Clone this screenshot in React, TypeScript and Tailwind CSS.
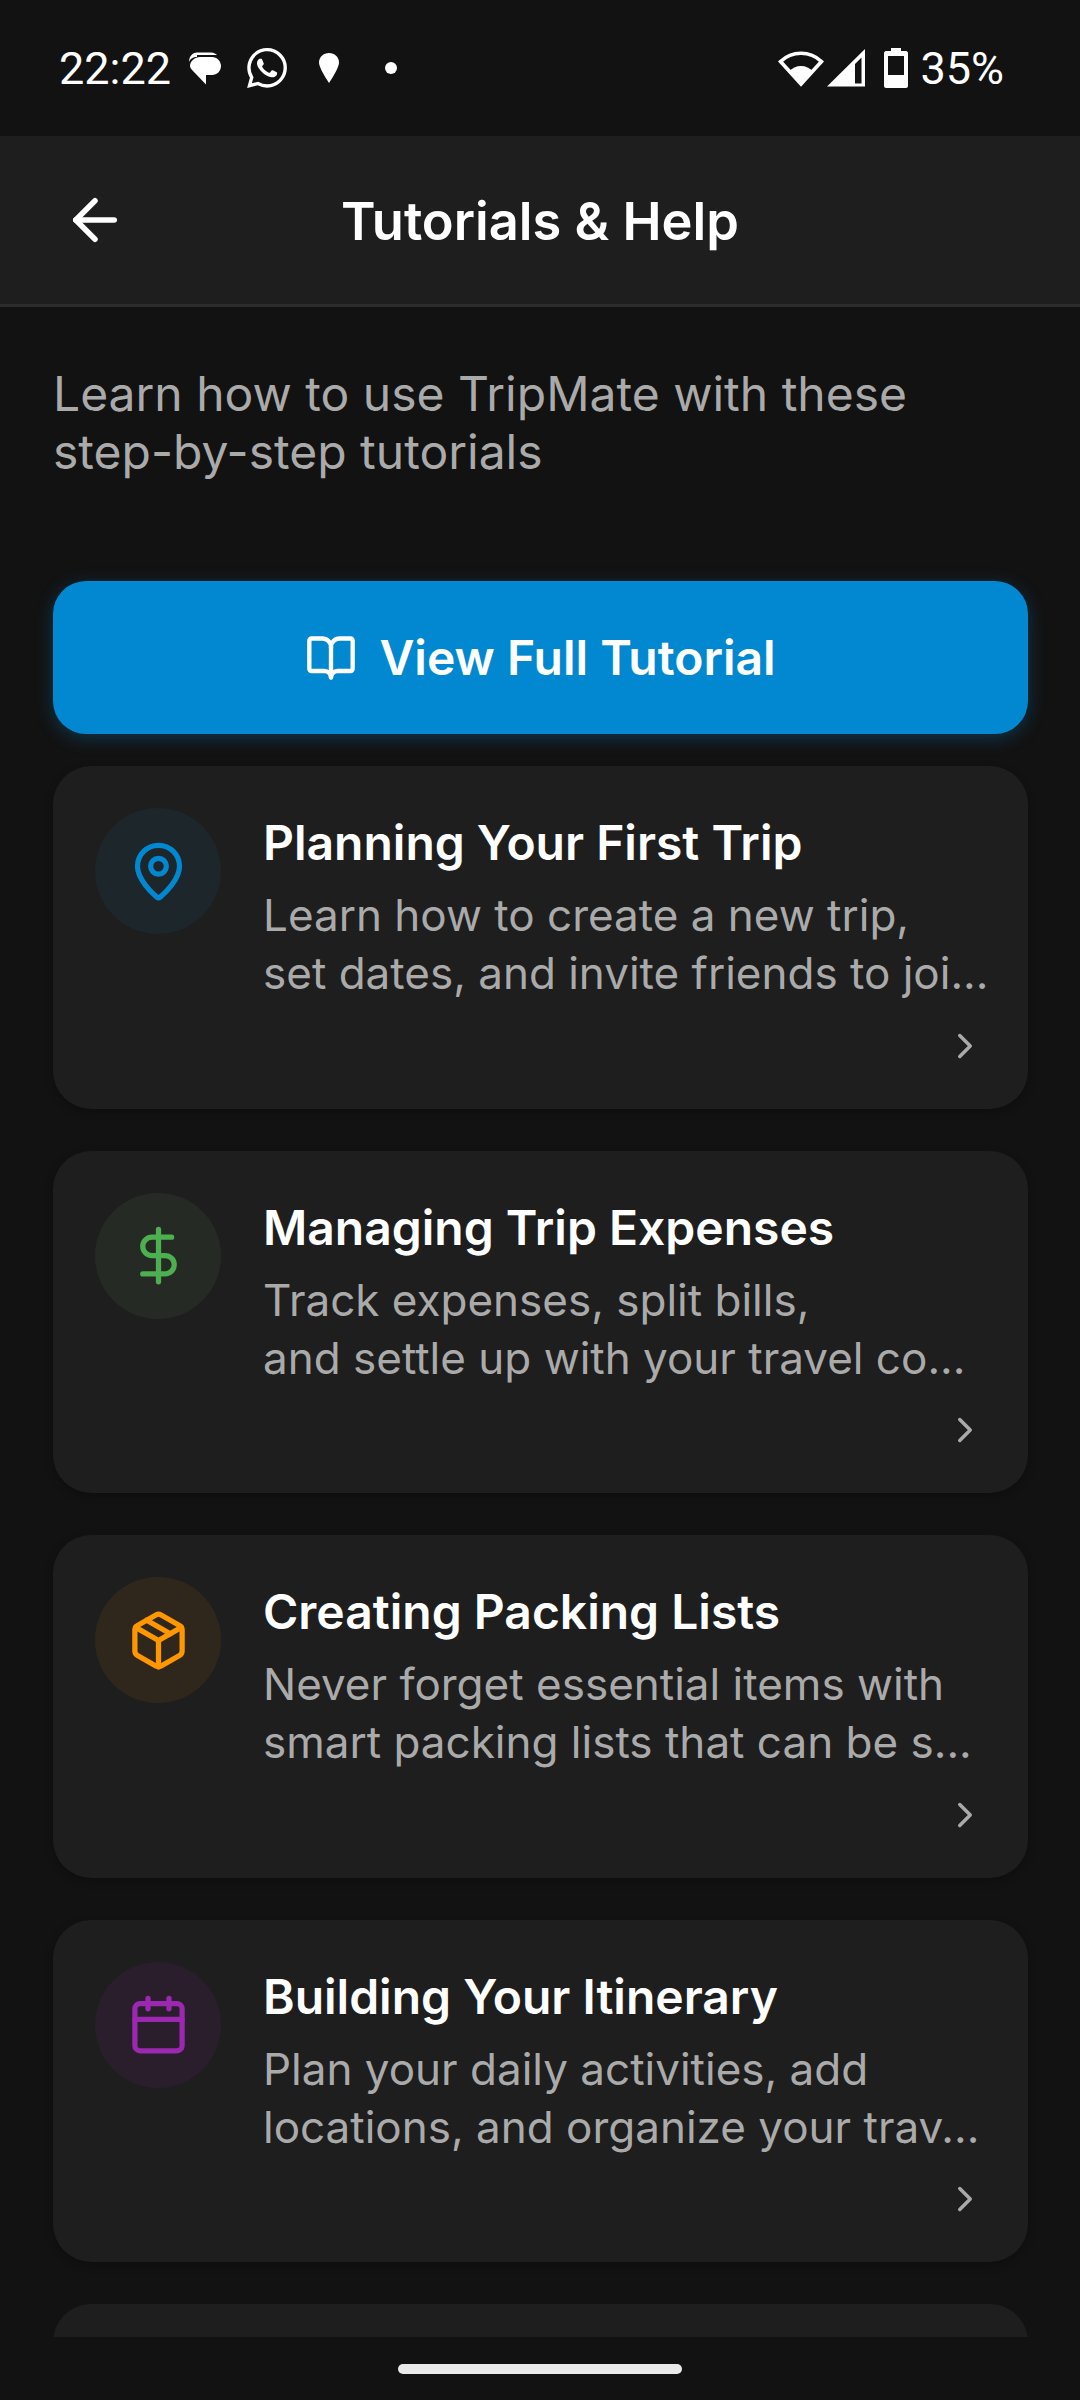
import { ArrowLeft, BookOpen, MapPin, DollarSign, Package, Calendar, ChevronRight } from "lucide-react";
import { SiWhatsapp } from "react-icons/si";

const cards = [
  { t: "Planning Your First Trip", a: "Learn how to create a new trip,", b: "set dates, and invite friends to joi...", I: MapPin, c: "text-[#0288d1]", bg: "bg-[#1c262b]" },
  { t: "Managing Trip Expenses", a: "Track expenses, split bills,", b: "and settle up with your travel co...", I: DollarSign, c: "text-[#4caf50]", bg: "bg-[#252b24]" },
  { t: "Creating Packing Lists", a: "Never forget essential items with", b: "smart packing lists that can be s...", I: Package, c: "text-[#ff9800]", bg: "bg-[#30271c]" },
  { t: "Building Your Itinerary", a: "Plan your daily activities, add", b: "locations, and organize your trav...", I: Calendar, c: "text-[#9c27b0]", bg: "bg-[#2a1e2d]" },
];

function StatusBar() {
  return (
    <div className="h-[136px] shrink-0 flex items-center pl-[59px] pr-[76px] text-white text-[45px] font-['Roboto',sans-serif]">
      <span className="leading-none">22:22</span>
      <svg className="ml-[17px]" width="33" height="33" viewBox="0 0 33 33" fill="white">
        <path d="M9 5C5 5 2 7 1 10 1 5 4 0.5 9 0.5H23C26 0.5 28 2 29 3H9Z" />
        <path d="M12 5H24C29 5 33 9 33 14 33 19 29 23 24 23H18V32.5L5 19C3 17 2 15 2 14 2 9 7 5 12 5Z" />
      </svg>
      <SiWhatsapp className="ml-[26px]" size={40} />
      <svg className="ml-[32px]" width="20" height="30" viewBox="0 0 20 30" fill="white">
        <path d="M10 0C15.5 0 20 4 20 9.5 20 14 14 24 10 30 6 24 0 14 0 9.5 0 4 4.5 0 10 0Z" />
      </svg>
      <div className="ml-[46px] w-[12px] h-[12px] rounded-full bg-white" />
      <div className="flex-1" />
      <svg width="46" height="38" viewBox="0 0 46 38" fill="white">
        <path d="M23 35L2.5 12.5C14 1.5 32 1.5 43.500 12.5Z" fill="none" stroke="white" strokeWidth="3.600" strokeLinejoin="miter" />
        <path d="M23 37L11 22.500C17 15 29 15 35 22.500Z" />
      </svg>
      <svg className="ml-[3px]" width="38" height="38" viewBox="0 0 38 38" fill="white">
        <path fillRule="evenodd" d="M0 37.500L38 0V37.500ZM28 34.500H34.500V8.500L28 15Z" />
      </svg>
      <svg className="ml-[19px]" width="24" height="40" viewBox="0 0 24 40" fill="white">
        <path fillRule="evenodd" d="M7 0H17V3H22C23 3 24 4 24 5V38C24 39 23 40 22 40H2C1 40 0 39 0 38V5C0 4 1 3 2 3H7ZM4 8V27H20V8Z" />
      </svg>
      <span className="ml-[12px] leading-none">35%</span>
    </div>
  );
}

function Card({ t, a, b, I, c, bg }: (typeof cards)[number]) {
  return (
    <div className="relative h-[342.6px] shrink-0 rounded-[38px] bg-[#1e1e1e] p-[42px] flex gap-[42px] shadow-[0_3px_8px_rgba(0,0,0,0.25)]">
      <div className={`w-[126px] h-[126px] rounded-full shrink-0 flex items-center justify-center ${bg} ${c}`}>
        <I size={63} strokeWidth={2} />
      </div>
      <div className="min-w-0 flex-1 mt-[2px] whitespace-nowrap">
        <div className="text-[48px] leading-[66px] font-semibold text-white">{t}</div>
        <div className="text-[44px] leading-[58px] text-[#aaaaaa] mt-[10px]">{a}</div>
        <div className="text-[44px] leading-[58px] text-[#aaaaaa]">{b}</div>
      </div>
      <ChevronRight className="absolute right-[42px] bottom-[42px] text-[#aaaaaa]" size={42} strokeWidth={2} />
    </div>
  );
}

export default function App() {
  return (
    <div className="w-[1080px] h-[2400px] bg-[#121212] flex flex-col overflow-hidden font-['Inter',sans-serif] [font-optical-sizing:none]">
      <StatusBar />
      <header className="relative h-[171px] shrink-0 bg-[#1e1e1e] border-b-[3px] border-[#2c2c2c] flex items-center justify-center">
        <ArrowLeft className="absolute left-[62px] top-[51px] text-white" size={66} strokeWidth={2} />
        <h1 className="text-[52.4px] font-semibold text-white translate-y-px">Tutorials &amp; Help</h1>
      </header>
      <main className="flex-1 min-h-0 overflow-hidden pl-[53px] pr-[52px] pt-[58px]">
        <p className="text-[48px] leading-[58px] text-[#aaaaaa]">
          Learn how to use TripMate with these
          <br />
          step-by-step tutorials
        </p>
        <button className="mt-[100px] w-full h-[153px] rounded-[33px] bg-[#0288d1] flex items-center justify-center gap-[22px] text-white text-[48px] font-semibold shadow-[0_4px_18px_rgba(2,136,209,0.3)]">
          <BookOpen size={52} strokeWidth={2} />
          View Full Tutorial
        </button>
        <div className="mt-[32px] flex flex-col gap-[42px]">
          {cards.map((x) => (
            <Card key={x.t} {...x} />
          ))}
          <div className="h-[343px] shrink-0 rounded-[38px] bg-[#1e1e1e]" />
        </div>
      </main>
      <div className="h-[63px] shrink-0 flex justify-center pt-[27px]">
        <div className="w-[284px] h-[10px] rounded-full bg-[#eaeaea]" />
      </div>
    </div>
  );
}
